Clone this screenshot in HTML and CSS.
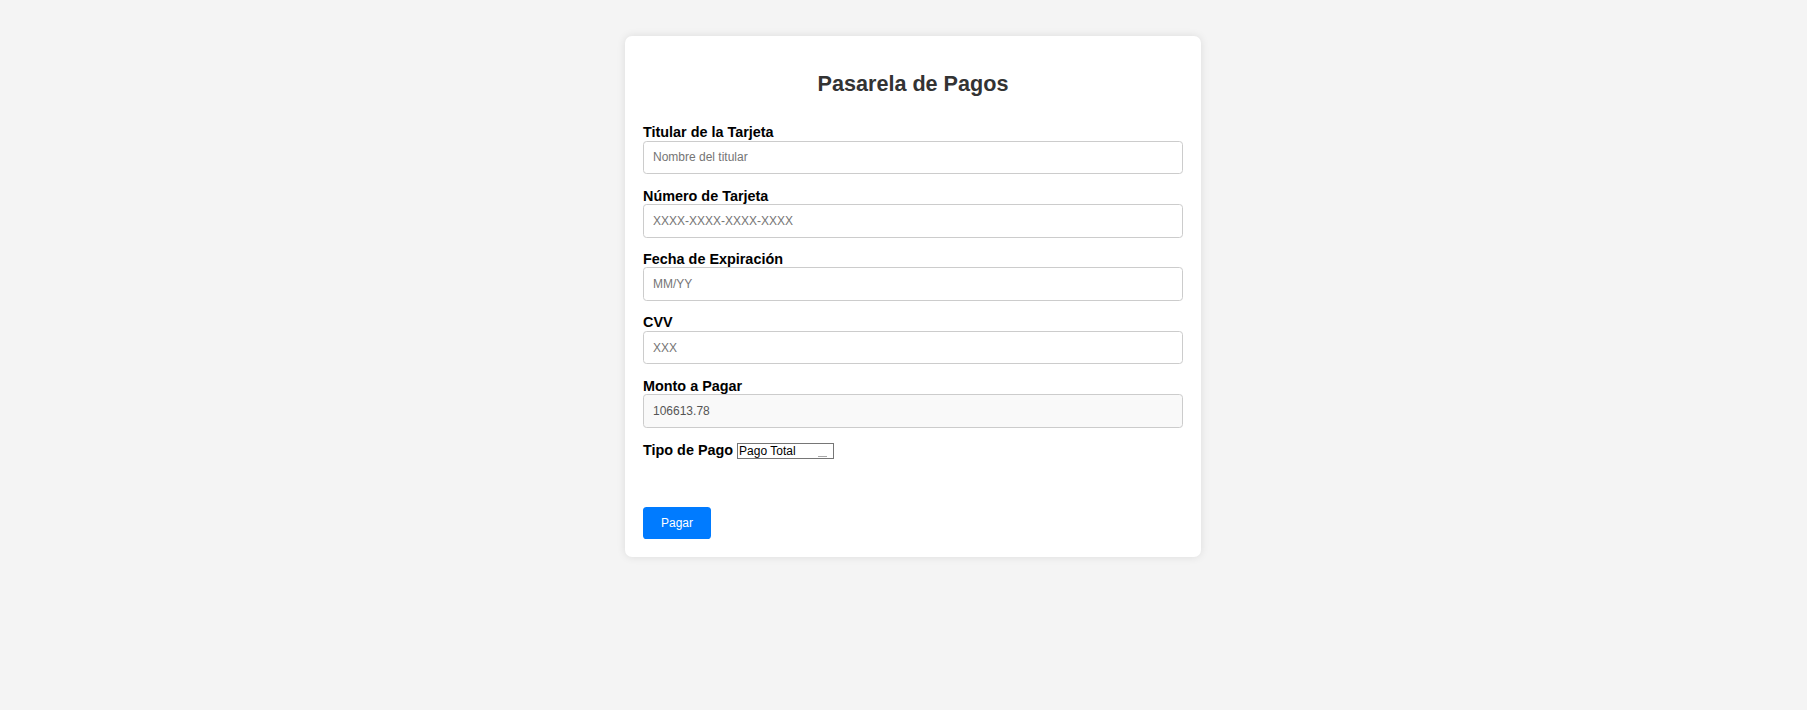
FILE: index.html
```html
<!DOCTYPE html>
<html lang="es">
<head>
<meta charset="utf-8">
<title>Pasarela de Pagos</title>
<link rel="stylesheet" href="styles.css">
</head>
<body>
<div class="card">
  <h2 class="title">Pasarela de Pagos</h2>
  <form class="form">
    <div class="group">
      <label class="label" for="titular">Titular de la Tarjeta</label>
      <input class="field" id="titular" type="text" placeholder="Nombre del titular">
    </div>
    <div class="group">
      <label class="label" for="numero">Número de Tarjeta</label>
      <input class="field" id="numero" type="text" placeholder="XXXX-XXXX-XXXX-XXXX">
    </div>
    <div class="group">
      <label class="label" for="fecha">Fecha de Expiración</label>
      <input class="field" id="fecha" type="text" placeholder="MM/YY">
    </div>
    <div class="group">
      <label class="label" for="cvv">CVV</label>
      <input class="field" id="cvv" type="text" placeholder="XXX">
    </div>
    <div class="group">
      <label class="label" for="monto">Monto a Pagar</label>
      <input class="field field-readonly" id="monto" type="text" value="106613.78" readonly>
    </div>
    <div class="group group-inline">
      <label class="label label-inline" for="tipo">Tipo de Pago</label>
      <select class="select" id="tipo">
        <option>Pago Total</option>
        <option>Pago Parcial</option>
      </select>
    </div>
    <button class="btn" type="button">Pagar</button>
  </form>
</div>
</body>
</html>
```

FILE: styles.css
```css
html, body {
  margin: 0;
  padding: 0;
}
body {
  background: #f4f4f4;
  font-family: "Liberation Sans", Arial, sans-serif;
  padding: 36px 0 0 19px;
  min-height: 710px;
  box-sizing: border-box;
}
.card {
  width: 576px;
  box-sizing: border-box;
  margin: 0 auto;
  background: #ffffff;
  border-radius: 7px;
  box-shadow: 0 0 9px rgba(0, 0, 0, 0.1);
  padding: 18px;
}
.title {
  margin: 18px 0 27.4px;
  font-size: 21.6px;
  line-height: 24.8px;
  font-weight: bold;
  color: #333333;
  text-align: center;
}
.form {
  margin: 0;
}
.group {
  margin-bottom: 13.5px;
}
.label {
  display: block;
  font-size: 14.4px;
  line-height: 16.4px;
  font-weight: bold;
  color: #000000;
}
.field {
  display: block;
  width: 100%;
  height: 33.5px;
  box-sizing: border-box;
  padding: 0 9px;
  border: 1px solid #cccccc;
  border-radius: 3.6px;
  font-family: "Liberation Sans", Arial, sans-serif;
  font-size: 12px;
  color: #333333;
  background: #ffffff;
  outline: none;
}
.field::placeholder {
  color: #757575;
}
.field-readonly {
  background: #f9f9f9;
  color: #555555;
}
.group-inline {
  display: flex;
  align-items: baseline;
  gap: 4px;
  padding-top: 1px;
}
.label-inline {
  display: inline;
}
.select {
  appearance: none;
  -webkit-appearance: none;
  width: 97px;
  height: 16px;
  box-sizing: border-box;
  margin: 0;
  padding: 0 1px;
  border: 1px solid #767676;
  border-radius: 0;
  font-family: "Liberation Sans", Arial, sans-serif;
  font-size: 12px;
  line-height: 14px;
  color: #000000;
  background-color: #ffffff;
  background-image: linear-gradient(#a8a8a8, #a8a8a8);
  background-size: 9px 1px;
  background-repeat: no-repeat;
  background-position: right 6px bottom 1px;
}
.btn {
  display: block;
  margin-top: 48px;
  height: 31.5px;
  padding: 0 18px;
  border: none;
  border-radius: 3.6px;
  background: #007bff;
  color: #ffffff;
  font-family: "Liberation Sans", Arial, sans-serif;
  font-size: 12px;
  cursor: pointer;
}
```
